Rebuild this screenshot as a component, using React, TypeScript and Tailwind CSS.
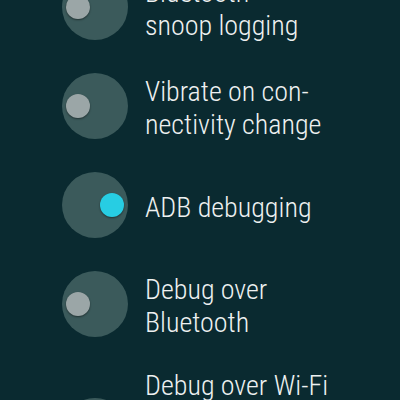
import React from "react";

type Item = { lines: string[]; on?: boolean };

const items: Item[] = [
  { lines: ["Bluetooth", "snoop logging"] },
  { lines: ["Vibrate on con-", "nectivity change"] },
  { lines: ["ADB debugging"], on: true },
  { lines: ["Debug over", "Bluetooth"] },
];

function Toggle({ on }: { on?: boolean }) {
  return (
    <div className="relative w-[66px] h-[66px] shrink-0 rounded-full bg-[#3b5a5b]">
      <div
        className={
          on
            ? "absolute top-[21px] left-[38px] w-6 h-6 rounded-full bg-[#27cde3] shadow-[0_1px_2px_rgba(0,0,0,0.45)]"
            : "absolute top-[21px] left-[4px] w-6 h-6 rounded-full bg-[#9ba6a7] shadow-[0_1px_2px_rgba(0,0,0,0.45)]"
        }
      />
    </div>
  );
}

export default function App() {
  return (
    <div className="w-[400px] h-[400px] overflow-hidden bg-[#0a2a30] font-['Roboto_Condensed','Roboto',sans-serif] font-light text-[#eef1f1]">
      <div className="flex flex-col -mt-[43px] pl-[62px]">
        {items.map((item, i) => (
          <div key={i} className="flex items-center gap-[17px] h-[99px]">
            <Toggle on={item.on} />
            <div className="mt-[5px] text-[28px] leading-[33px]">
              {item.lines.map((l) => (
                <div key={l}>{l}</div>
              ))}
            </div>
          </div>
        ))}
        {/* last row sits lower, its subtitle is cut off */}
        <div className="flex items-center gap-[17px] h-[155px]">
          <Toggle />
          <div className="mt-[5px] text-[28px] leading-[33px]">
            <div>Debug over Wi-Fi</div>
            <div className="h-[95px] text-lg text-[#9fb0b1]">Unavailable</div>
          </div>
        </div>
      </div>
    </div>
  );
}
